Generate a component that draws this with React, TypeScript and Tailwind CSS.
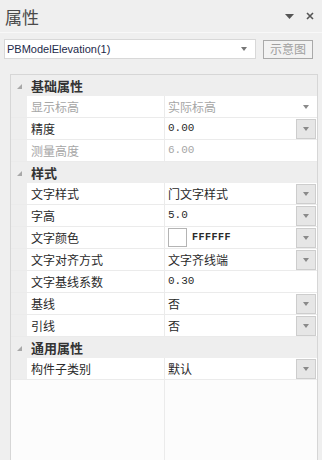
import React from 'react';

type Prop = {
  name: string;
  value: string;
  disabled?: boolean;
  button?: boolean;
  arrow?: boolean;
  swatch?: boolean;
};

type Section = { title: string; props: Prop[] };

const sections: Section[] = [
  {
    title: '基础属性',
    props: [
      { name: '显示标高', value: '实际标高', disabled: true, arrow: true },
      { name: '精度', value: '0.00', button: true },
      { name: '测量高度', value: '6.00', disabled: true },
    ],
  },
  {
    title: '样式',
    props: [
      { name: '文字样式', value: '门文字样式', button: true },
      { name: '字高', value: '5.0', button: true },
      { name: '文字颜色', value: 'FFFFFF', button: true, swatch: true },
      { name: '文字对齐方式', value: '文字齐线端', button: true },
      { name: '文字基线系数', value: '0.30' },
      { name: '基线', value: '否', button: true },
      { name: '引线', value: '否', button: true },
    ],
  },
  {
    title: '通用属性',
    props: [{ name: '构件子类别', value: '默认', button: true }],
  },
];

const SmallArrow = ({ color = '#6b6b6b' }: { color?: string }) => (
  <svg width="6" height="4" viewBox="0 0 6 4">
    <polygon points="0,0 6,0 3,4" fill={color} />
  </svg>
);

const Expander = () => (
  <svg width="5" height="5" viewBox="0 0 5 5">
    <polygon points="5,0 5,5 0,5" fill="#a8a8a8" />
  </svg>
);

const isNumeric = (v: string) => /^[0-9.]+$/.test(v);

const PropRow = ({ p }: { p: Prop }) => (
  <div className="flex h-[22px] border-b border-[#ebebeb]">
    <div className="w-[16px] bg-[#eeeeee]" />
    <div
      className={`w-[138px] bg-white pl-[4px] flex items-center border-r border-[#ebebeb] text-[12px] ${
        p.disabled ? 'text-[#a6a6a6]' : 'text-[#2a2a2a]'
      }`}
    >
      {p.name}
    </div>
    <div className="flex-1 bg-white flex items-center justify-between pl-[3px]">
      <div className="flex items-center gap-[5px]">
        {p.swatch && <div className="w-[19px] h-[19px] bg-white border border-[#b4b4b4]" />}
        <span
          className={`${
            p.swatch
              ? "font-['Liberation_Mono',monospace] text-[10px] font-bold tracking-[0.5px]"
              : isNumeric(p.value)
              ? "font-['Liberation_Mono',monospace] text-[11px]"
              : 'text-[12px]'
          } ${p.disabled ? 'text-[#a6a6a6]' : 'text-[#2a2a2a]'}`}
        >
          {p.value}
        </span>
      </div>
      {p.button && (
        <div className="w-[20px] h-[20px] mr-[1px] bg-[#e6e6e6] border border-[#cdcdcd] flex items-center justify-center">
          <SmallArrow color="#8a8a8a" />
        </div>
      )}
      {p.arrow && (
        <div className="mr-[8px] flex items-center">
          <SmallArrow color="#8a8a8a" />
        </div>
      )}
    </div>
  </div>
);

export default function App() {
  return (
    <div className="w-[322px] h-[460px] bg-[#efefef] flex flex-col overflow-hidden font-['Noto_Sans_CJK_SC','Noto_Sans',sans-serif]">
      {/* title bar */}
      <div className="h-[33px] flex items-center justify-between pl-[5px] pr-[8px] border-b border-[#f8f8f8]">
        <span className="text-[17px] text-[#4a4a4a] leading-none">属性</span>
        <div className="flex items-center gap-[12px]">
          <svg width="9" height="5" viewBox="0 0 9 5">
            <polygon points="0,0 9,0 4.5,5" fill="#555" />
          </svg>
          <svg width="8" height="8" viewBox="0 0 8 8">
            <path d="M1 1 L7 7 M7 1 L1 7" stroke="#555" strokeWidth="1.6" />
          </svg>
        </div>
      </div>

      {/* selector */}
      <div className="flex items-center mt-[6px] pl-[4px] pr-[8px] gap-[7px]">
        <div className="w-[252px] h-[20px] bg-white border border-[#d8d8d8] flex items-center justify-between pl-[2px] pr-[8px]">
          <span className="text-[11px] text-[#1d2a4a] font-['Liberation_Sans',sans-serif]">PBModelElevation(1)</span>
          <SmallArrow color="#777" />
        </div>
        <div className="w-[50px] h-[19px] border border-[#a9a9a9] bg-[#f2f2f2] flex items-center justify-center text-[12px] text-[#a0a0a0]">
          示意图
        </div>
      </div>

      {/* property grid */}
      <div className="mt-[15px] ml-[10px] w-[308px] flex-1 flex flex-col border border-[#d6d6d6] border-b-0 bg-[#fcfcfc]">
        {sections.map((s) => (
          <React.Fragment key={s.title}>
            <div className="h-[21px] flex items-center bg-[#eeeeee]">
              <div className="w-[16px] flex items-center justify-center pt-[2px]">
                <Expander />
              </div>
              <span className="pl-[4px] text-[13px] font-bold text-[#333]">{s.title}</span>
            </div>
            {s.props.map((p) => (
              <PropRow key={p.name} p={p} />
            ))}
          </React.Fragment>
        ))}
        <div className="flex-1 flex">
          <div className="w-[154px] border-r border-[#ebebeb]" />
          <div className="flex-1" />
        </div>
      </div>
    </div>
  );
}
